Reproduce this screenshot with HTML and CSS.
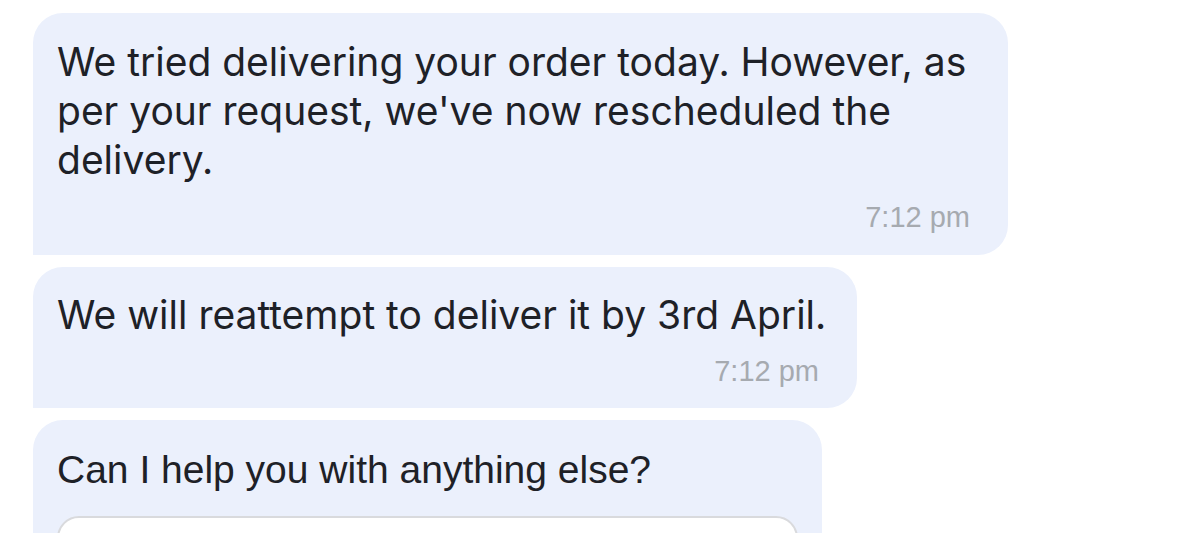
FILE: index.html
```html
<!DOCTYPE html>
<html lang="en">
<head>
<meta charset="utf-8">
<title>Chat</title>
<link rel="stylesheet" href="styles.css">
</head>
<body>
<div class="chat">
  <div class="bubble b1">
    <p class="msg">We tried delivering your order today. However, as per your request, we've now rescheduled the delivery.</p>
    <div class="time">7:12 pm</div>
  </div>
  <div class="bubble b2">
    <p class="msg">We will reattempt to deliver it by 3rd April.</p>
    <div class="time">7:12 pm</div>
  </div>
  <div class="bubble b3">
    <p class="msg alt">Can I help you with anything else?</p>
    <div class="option"></div>
  </div>
</div>
</body>
</html>
```

FILE: styles.css
```css
html, body {
  margin: 0;
  padding: 0;
  background: #ffffff;
  height: 533px;
  overflow: hidden;
}
.chat {
  display: flex;
  flex-direction: column;
  align-items: flex-start;
  gap: 12px;
  padding: 13px 0 0 33px;
}
.bubble {
  background: #ebf0fc;
  border-radius: 30px 30px 30px 0;
  padding: 24px 26px 0 24px;
  box-sizing: border-box;
  display: flex;
  flex-direction: column;
}
.b1 { width: 975px; height: 242px; }
.b2 { width: 824px; height: 141px; padding-top: 23px; }
.b3 { width: 789px; height: 200px; padding-top: 25px; }
.msg {
  margin: 0;
  font-family: Inter, "Noto Sans", sans-serif;
  font-size: 39px;
  line-height: 49px;
  color: #1e2127;
}
.alt {
  font-family: "Liberation Sans", Arial, sans-serif;
}
.time {
  align-self: flex-end;
  margin-right: 12px;
  margin-top: 19px;
  font-family: "Liberation Sans", Arial, sans-serif;
  font-size: 29px;
  line-height: 29px;
  color: #a6aab0;
}
.b2 .time { margin-top: 18px; }
.option {
  margin-top: 22px;
  height: 80px;
  width: 741px;
  background: #ffffff;
  border: 2px solid #d9dadd;
  border-radius: 22px;
  box-sizing: border-box;
}
```
